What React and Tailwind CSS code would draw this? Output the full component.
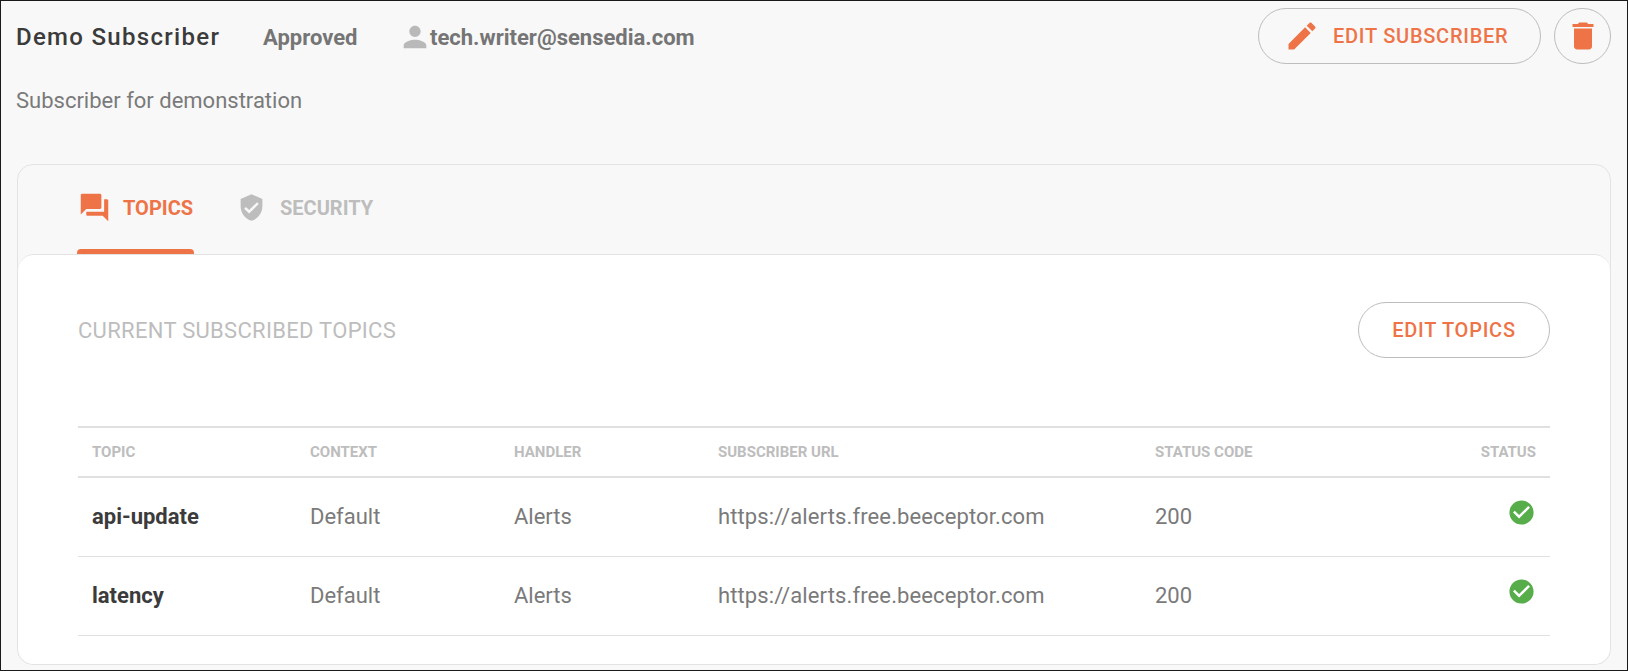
const font = { fontFamily: "Roboto, sans-serif" };

function Icon({ d, className }) {
  return (
    <svg viewBox="0 0 24 24" fill="currentColor" className={className}>
      <path d={d} />
    </svg>
  );
}

const icons = {
  edit: "M3 17.25V21h3.75L17.81 9.94l-3.75-3.75L3 17.25zM20.71 7.04c.39-.39.39-1.02 0-1.41l-2.34-2.34c-.39-.39-1.02-.39-1.41 0l-1.83 1.83 3.75 3.75 1.83-1.83z",
  trash: "M6 19c0 1.1.9 2 2 2h8c1.1 0 2-.9 2-2V7H6v12zM19 4h-3.5l-1-1h-5l-1 1H5v2h14V4z",
  person: "M12 12c2.21 0 4-1.79 4-4s-1.79-4-4-4-4 1.79-4 4 1.79 4 4 4zm0 2c-2.67 0-8 1.34-8 4v2h16v-2c0-2.66-5.33-4-8-4z",
  forum: "M21 6h-2v9H6v2c0 .55.45 1 1 1h11l4 4V7c0-.55-.45-1-1-1zm-4 6V3c0-.55-.45-1-1-1H3c-.55 0-1 .45-1 1v14l4-4h10c.55 0 1-.45 1-1z",
  shield: "M12 1L3 5v6c0 5.55 3.84 10.74 9 12 5.16-1.26 9-6.45 9-12V5l-9-4zm-2 16l-4-4 1.41-1.41L10 14.17l6.59-6.59L18 9l-8 8z",
  check: "M12 2C6.48 2 2 6.48 2 12s4.48 10 10 10 10-4.48 10-10S17.52 2 12 2zm-2 15l-5-5 1.41-1.41L10 14.17l7.59-7.59L19 8l-9 9z",
};

const rows = [
  { topic: "api-update", context: "Default", handler: "Alerts", url: "https://alerts.free.beeceptor.com", code: "200" },
  { topic: "latency", context: "Default", handler: "Alerts", url: "https://alerts.free.beeceptor.com", code: "200" },
];

export default function App() {
  return (
    <div style={font} className="h-[671px] border border-[#1a1a1a] bg-[#f8f8f8] overflow-hidden">
      {/* Header */}
      <div className="flex items-start justify-between pl-[15px] pr-4 pt-[7px]">
        <div>
          <div className="flex items-center h-[56px] pt-[2px]">
            <h1 className="text-2xl font-medium tracking-[1.3px] text-[#3b3b3b] w-[247px]">Demo Subscriber</h1>
            <span className="text-[22px] font-bold text-[#757575] w-[135px]">Approved</span>
            <Icon d={icons.person} className="w-[34px] h-[34px] -mr-[2px] text-[#b9b9b9]" />
            <span className="text-[22px] font-bold text-[#757575]">tech.writer@sensedia.com</span>
          </div>
          <p className="mt-[20px] text-[22px] text-[#7a7a7a]">Subscriber for demonstration</p>
        </div>
        <div className="flex gap-[13px]">
          <button className="flex items-center h-[56px] w-[283px] pl-[25px] rounded-full border border-[#bdbdbd] text-[#ee7448] text-xl font-medium tracking-[0.75px]">
            <Icon d={icons.edit} className="w-9 h-9 mr-[13px]" />
            EDIT SUBSCRIBER
          </button>
          <button className="flex items-center justify-center w-[57px] h-[56px] rounded-full border border-[#bdbdbd] text-[#ee7448]">
            <Icon d={icons.trash} className="w-9 h-9" />
          </button>
        </div>
      </div>

      {/* Card */}
      <div className="mx-4 mt-[47px] h-[501px] flex flex-col rounded-2xl border border-[#e3e3e3]">
        <div className="flex pl-[59px] h-[89px] shrink-0">
          <div className="relative flex items-center w-[117px] pl-px pb-1 text-[#ee7448]">
            <Icon d={icons.forum} className="w-[33px] h-[33px] mr-3" />
            <span className="text-xl font-bold">TOPICS</span>
            <div className="absolute left-0 right-0 bottom-0 h-[5px] rounded-t bg-[#ee7448]" />
          </div>
          <div className="flex items-center ml-[43px] pb-1 text-[#bdbdbd]">
            <Icon d={icons.shield} className="w-[29px] h-[29px] mr-[14px]" />
            <span className="text-xl font-bold">SECURITY</span>
          </div>
        </div>

        <div className="flex-1 bg-white rounded-2xl border-t border-[#e3e3e3] px-[60px]">
          <div className="flex items-center justify-between mt-[47px] h-[56px]">
            <h2 className="text-[22px] tracking-[0.3px] text-[#bdbdbd]">CURRENT SUBSCRIBED TOPICS</h2>
            <button className="h-[56px] w-[192px] rounded-full border border-[#bdbdbd] text-[#ee7448] text-xl font-medium tracking-[0.75px]">
              EDIT TOPICS
            </button>
          </div>

          <table className="w-full mt-[68px] table-fixed">
            <thead>
              <tr className="h-[50px] border-y-2 border-[#e0e0e0] text-[15px] font-bold text-[#bdbdbd]">
                <th className="w-[218px] pl-[14px] text-left">TOPIC</th>
                <th className="w-[204px] pl-[14px] text-left">CONTEXT</th>
                <th className="w-[204px] pl-[14px] text-left">HANDLER</th>
                <th className="w-[437px] pl-[14px] text-left">SUBSCRIBER URL</th>
                <th className="pl-[14px] text-left">STATUS CODE</th>
                <th className="pr-[14px] text-right">STATUS</th>
              </tr>
            </thead>
            <tbody>
              {rows.map((row) => (
                <tr key={row.topic} className="h-[79px] border-b border-[#e0e0e0] text-[22px] text-[#7a7a7a]">
                  <td className="pl-[14px] font-bold text-[#3b3b3b]">{row.topic}</td>
                  <td className="pl-[14px]">{row.context}</td>
                  <td className="pl-[14px]">{row.handler}</td>
                  <td className="pl-[14px] tracking-[0.12px]">{row.url}</td>
                  <td className="pl-[14px]">{row.code}</td>
                  <td className="pr-[14px]">
                    <div className="flex justify-end pb-2">
                      <Icon d={icons.check} className="w-[29px] h-[29px] text-[#57ad4a]" />
                    </div>
                  </td>
                </tr>
              ))}
            </tbody>
          </table>
        </div>
      </div>
    </div>
  );
}
